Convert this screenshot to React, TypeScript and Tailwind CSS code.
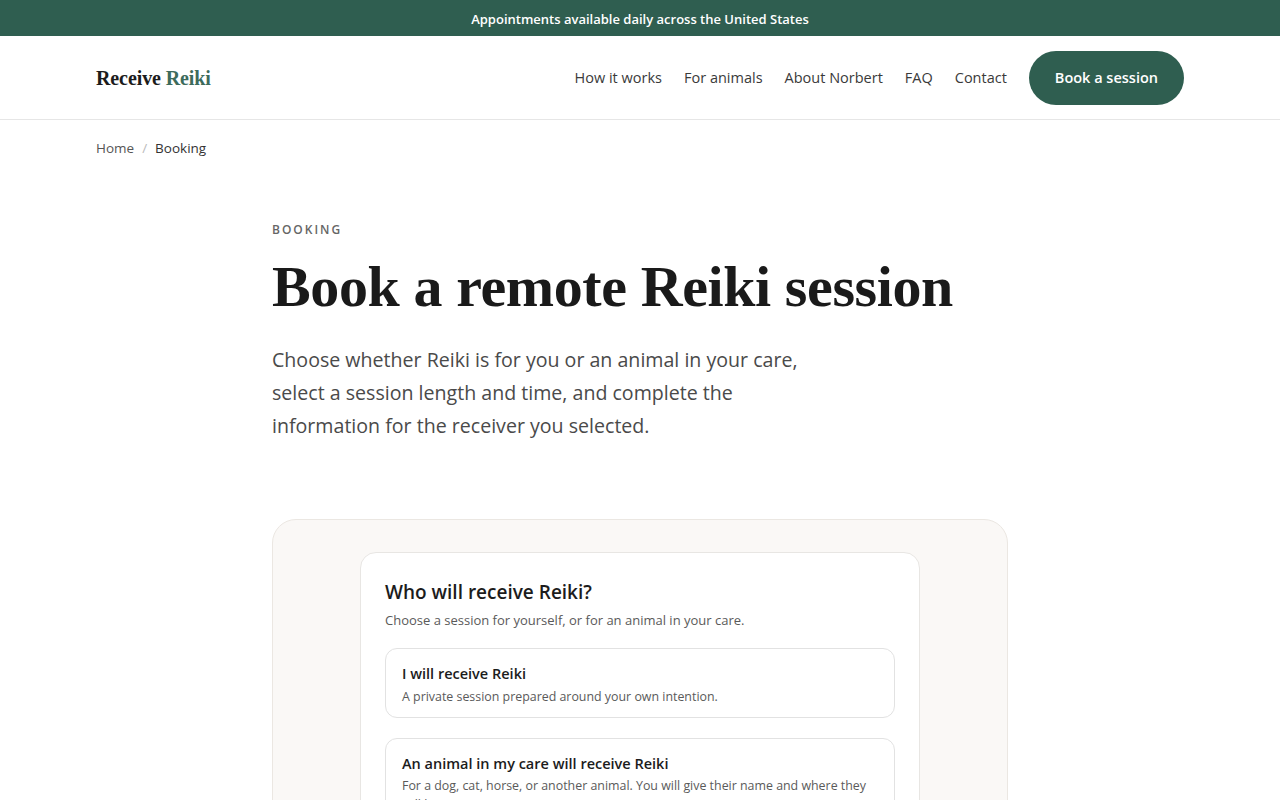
import React from 'react';

const sans = "font-['Open_Sans',sans-serif]";
const serif = "font-['Liberation_Serif',serif]";

const navLinks = ['How it works', 'For animals', 'About Norbert', 'FAQ', 'Contact'];

const options = [
  {
    title: 'I will receive Reiki',
    desc: 'A private session prepared around your own intention.',
  },
  {
    title: 'An animal in my care will receive Reiki',
    desc: 'For a dog, cat, horse, or another animal. You will give their name and where they will be.',
  },
];

export default function App() {
  return (
    <div className={`min-h-screen bg-white text-[#1c1c1c] ${sans}`}>
      {/* announcement */}
      <div className="flex h-9 items-center justify-center bg-[#2f5e50] pt-[3px] text-[13px] font-semibold text-white">
        Appointments available daily across the United States
      </div>

      {/* header */}
      <header className="border-b border-[#e6e6e6]">
        <div className="mx-auto flex h-[83px] max-w-[1088px] items-center justify-between">
          <a className={`${serif} text-[20px] font-bold tracking-[-0.1px]`}>
            Receive <span className="text-[#3d6b5c]">Reiki</span>
          </a>
          <nav className="flex items-center gap-[22px] text-[14.5px] text-[#3a3a3a]">
            {navLinks.map((l) => (
              <a key={l}>{l}</a>
            ))}
            <button className="h-[54px] rounded-full bg-[#2f5e50] px-[26px] text-[14.5px] font-semibold text-white">
              Book a session
            </button>
          </nav>
        </div>
      </header>

      {/* breadcrumb */}
      <div className="mx-auto flex max-w-[1088px] items-center gap-2 pt-[18px] text-[13.5px] text-[#555]">
        <span>Home</span>
        <span className="text-[#bbb]">/</span>
        <span className="text-[#333]">Booking</span>
      </div>

      <main className="mx-auto max-w-[736px] pt-[63px]">
        <p className="text-[12px] font-semibold uppercase tracking-[2px] text-[#666]">Booking</p>
        <h1 className={`${serif} mt-[15px] text-[58px] font-bold leading-[1.15] tracking-[-0.4px] text-[#1a1a1a]`}>
          Book a remote Reiki session
        </h1>
        <p className="mt-[22px] max-w-[540px] text-[19.6px] leading-[33px] text-[#4a4a4a]">
          Choose whether Reiki is for you or an animal in your care, select a session length and time, and complete
          the information for the receiver you selected.
        </p>

        <section className="mt-[77px] rounded-[24px] border border-[#ebe7e2] bg-[#faf8f6] px-[87px] pt-[32px] pb-10">
          <div className="rounded-[16px] border border-[#e8e6e3] bg-white px-6 pt-[25px] pb-6">
            <h2 className="text-[19px] font-semibold text-[#1c1c1c]">Who will receive Reiki?</h2>
            <p className="mt-[5px] text-[13px] text-[#5a5a5a]">Choose a session for yourself, or for an animal in your care.</p>
            <div className="mt-[17px] flex flex-col gap-[20px]">
              {options.map((o) => (
                <button
                  key={o.title}
                  className="rounded-[12px] border border-[#e2e2e2] bg-white px-4 pt-[14px] pb-[11px] text-left"
                >
                  <div className="text-[14.5px] font-semibold text-[#1c1c1c]">{o.title}</div>
                  <div className="mt-[2px] text-[12.4px] leading-[19px] text-[#5a5a5a]">{o.desc}</div>
                </button>
              ))}
            </div>
          </div>
        </section>
      </main>
    </div>
  );
}
